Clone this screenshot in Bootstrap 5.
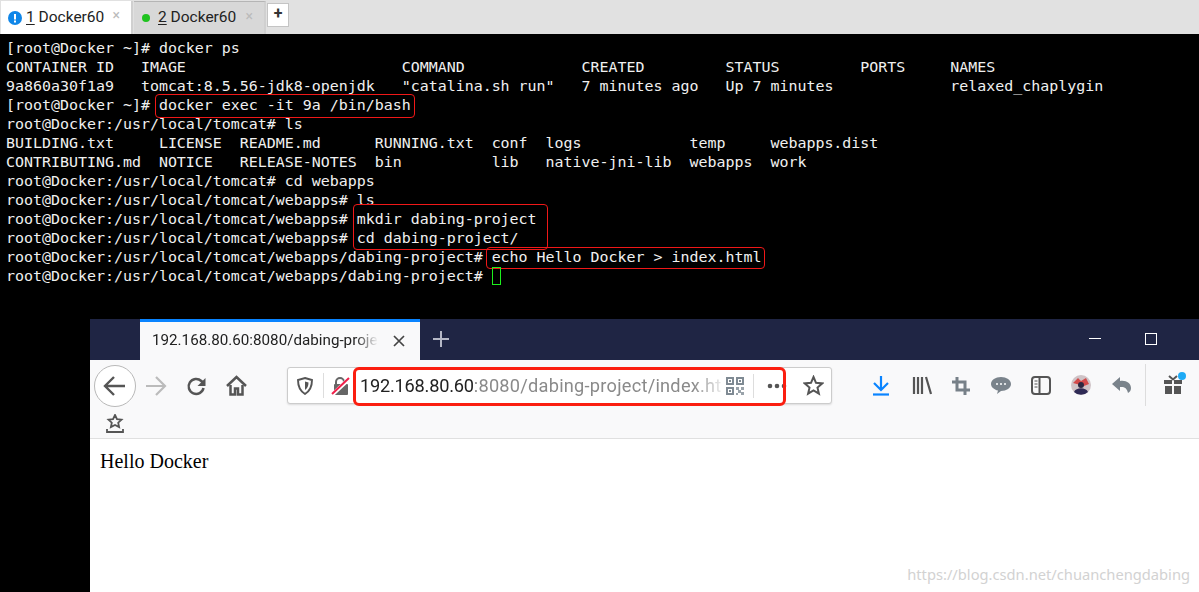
<!DOCTYPE html>
<html lang="en">
<head>
<meta charset="utf-8">
<title>Docker60</title>
<link href="https://cdn.jsdelivr.net/npm/bootstrap@5.3.0/dist/css/bootstrap.min.css" rel="stylesheet">
<style>
html,body{margin:0;height:592px;overflow:hidden;background:#000}
.desk{position:relative;width:1199px;height:592px;overflow:hidden;background:#000}
.tabbar{height:34px;background:#e1e1e1;padding-left:1px;font-family:Roboto,sans-serif;font-size:15.5px}
.xtab{height:33px;width:132px;margin-top:1px;background:#fff;color:#222;padding-left:7px;border-right:2px solid #d0d0d0;position:relative}
.xtab.off{background:#d8d8d8;margin-left:1px;color:#222;width:132px;border-top:1px solid #b5b5b5;padding-left:8px}
.xtab u{text-underline-offset:2px}
.xclose{position:absolute;right:11px;top:4px;color:#bbb;font-size:14px;line-height:20px}
.dotg{width:8px;height:8px;border-radius:50%;background:#1fc31f;display:block}
.plusb{width:22px;height:24px;background:#fff;border:1px solid #c4c4c4;margin:3px 0 0 1px;font-weight:700;color:#333;font-size:16px;line-height:20px;text-align:center}
.term{margin:0;padding:5px 0 0 6px;color:#f0f0f0;font-family:"DejaVu Sans Mono",monospace;font-size:14.95px;line-height:19px;overflow:visible}
.rbox{position:absolute;border:1px solid #f01818;border-radius:4px}
.r1{left:155px;top:94px;width:260px;height:24px}
.r2{left:353px;top:204px;width:195px;height:46px}
.r3{left:486px;top:247px;width:279px;height:22px}
.cursor{position:absolute;left:492px;top:267px;width:9px;height:18px;border:1px solid #1df01d}
.bwin{position:absolute;left:90px;top:319px;width:1109px;height:273px;background:#fff;font-family:Roboto,sans-serif}
.btitle{height:41px;background:#1f2544}
.btab{margin-left:50px;width:280px;height:41px;background:#f9f9fa;border-top:3px solid #0a84ff;font-size:15.2px;color:#222;padding-left:12px;white-space:nowrap;line-height:37px;position:relative}
.tabtxt{-webkit-mask-image:linear-gradient(90deg,#000 90%,transparent);mask-image:linear-gradient(90deg,#000 90%,transparent);display:inline-block}
.btab svg{position:absolute;left:252px;top:12px}
.bplus{margin-left:11px;margin-top:10px}
.winbtns{margin-left:auto;padding-right:42px;gap:44px;padding-top:14px;height:41px}
.tool{height:79px;background:#f9f9fa;border-bottom:1px solid #e0e0e0;position:relative}
.urlb{position:absolute;left:197px;top:7px;width:545px;height:37px;background:#fff;border:1px solid #ccc;border-radius:3px;box-shadow:0 1px 2px rgba(0,0,0,.12);font-size:18.2px;line-height:35px;white-space:nowrap}
.urltxt{position:absolute;left:72px;top:0;color:#8a8a8a;height:35px;letter-spacing:.25px;-webkit-mask-image:linear-gradient(90deg,#000 92%,rgba(0,0,0,.15));mask-image:linear-gradient(90deg,#000 92%,rgba(0,0,0,.15))}
.urltxt b{font-weight:400;color:#222;letter-spacing:-.22px}
.rurl{position:absolute;left:263px;top:7px;width:433px;height:39px;border:3.5px solid #fb1e10;border-radius:6px}
.ico{position:absolute}
.bbody{padding:11px 10px;font-family:"Liberation Serif",serif;font-size:20px;color:#000;line-height:22px}
.wmark{position:absolute;right:9px;bottom:9px;color:#d2d2d2;font-family:"Noto Sans",sans-serif;font-size:14.7px;line-height:18px;white-space:nowrap}
</style>
</head>
<body>
<div class="desk">
  <div class="tabbar d-flex">
    <div class="xtab d-flex align-items-center gap-1">
      <svg width="14" height="14" viewBox="0 0 14 14"><circle cx="7" cy="7" r="7" fill="#0f86e8"/><rect x="6" y="3" width="2" height="5.5" fill="#fff"/><rect x="6" y="9.500" width="2" height="2" fill="#fff"/></svg>
      <span><u>1</u> Docker60</span><span class="xclose">×</span>
    </div>
    <div class="xtab off d-flex align-items-center gap-2">
      <span class="dotg"></span><span><u>2</u> Docker60</span><span class="xclose">×</span>
    </div>
    <div class="plusb">+</div>
  </div>
<pre class="term">[root@Docker ~]# docker ps
CONTAINER ID   IMAGE                        COMMAND             CREATED         STATUS         PORTS     NAMES
9a860a30f1a9   tomcat:8.5.56-jdk8-openjdk   "catalina.sh run"   7 minutes ago   Up 7 minutes             relaxed_chaplygin
[root@Docker ~]# docker exec -it 9a /bin/bash
root@Docker:/usr/local/tomcat# ls
BUILDING.txt     LICENSE  README.md      RUNNING.txt  conf  logs            temp     webapps.dist
CONTRIBUTING.md  NOTICE   RELEASE-NOTES  bin          lib   native-jni-lib  webapps  work
root@Docker:/usr/local/tomcat# cd webapps
root@Docker:/usr/local/tomcat/webapps# ls
root@Docker:/usr/local/tomcat/webapps# mkdir dabing-project
root@Docker:/usr/local/tomcat/webapps# cd dabing-project/
root@Docker:/usr/local/tomcat/webapps/dabing-project# echo Hello Docker &gt; index.html
root@Docker:/usr/local/tomcat/webapps/dabing-project# </pre>
  <div class="rbox r1"></div><div class="rbox r2"></div><div class="rbox r3"></div><div class="cursor"></div>

  <div class="bwin">
    <div class="btitle d-flex">
      <div class="btab"><span class="tabtxt">192.168.80.60:8080/dabing-proje</span>
        <svg width="14" height="14" viewBox="0 0 14 14"><path d="M2 2l10 10M12 2L2 12" stroke="#444" stroke-width="1.7"/></svg></div>
      <svg class="bplus" width="20" height="20" viewBox="0 0 20 20"><path d="M10 2v16M2 10h16" stroke="#b5b8c6" stroke-width="2"/></svg>
      <div class="winbtns d-flex">
        <svg width="12" height="12" viewBox="0 0 12 12"><path d="M0 5.500h12" stroke="#fff"/></svg>
        <svg width="12" height="12" viewBox="0 0 12 12"><rect x=".5" y=".5" width="11" height="11" fill="none" stroke="#fff"/></svg>
      </div>
    </div>
    <div class="tool">
      <svg class="ico" style="left:4px;top:5px" width="42" height="42" viewBox="0 0 42 42"><circle cx="21" cy="21" r="20.500" fill="#fff" stroke="#b8b8b8"/><path d="M31 21H12M20 12l-9 9 9 9" fill="none" stroke="#555" stroke-width="2.400"/></svg>
      <svg class="ico" style="left:55px;top:16px" width="22" height="20" viewBox="0 0 22 20"><path d="M1 10h19M11 1l9 9-9 9" fill="none" stroke="#bbb" stroke-width="2.200"/></svg>
      <svg class="ico" style="left:96px;top:16px" width="21" height="21" viewBox="0 0 21 21"><path d="M17.500 12a7.500 7.500 0 1 1-2.200-7L18 7.500" fill="none" stroke="#555" stroke-width="2.500"/><path d="M19.500 2v8h-8z" fill="#555"/></svg>
      <svg class="ico" style="left:136px;top:15px" width="21" height="21" viewBox="0 0 21 21"><path d="M1 11l9.500-9 9.500 9" fill="none" stroke="#555" stroke-width="2.500"/><path d="M4.500 10v9.500h4.500v-6h3v6h4.500V10" fill="none" stroke="#555" stroke-width="2.500"/></svg>
      <svg class="ico" style="left:16px;top:54px" width="18" height="20" viewBox="0 0 18 20"><path d="M9 1l2 4.200 4.500.5-3.300 3 .9 4.400L9 10.900l-4.100 2.200.9-4.400-3.300-3L7 5.200z" fill="none" stroke="#555" stroke-width="1.800"/><path d="M1 15v3h16v-3" fill="none" stroke="#555" stroke-width="1.800"/></svg>
      <div class="urlb">
        <svg class="ico" style="left:9px;top:9px" width="16" height="18" viewBox="0 0 16 18"><path d="M8 1l7 2c0 7-2 11-7 14C3 14 1 10 1 3z" fill="none" stroke="#555" stroke-width="1.900"/><path d="M8 4.500l3.500 1c0 3.500-1 5.500-3.500 7.500z" fill="#555"/></svg>
        <span class="ico" style="left:35px;top:5px;height:25px;border-left:1px solid #ddd"></span>
        <svg class="ico" style="left:43px;top:8px" width="19" height="20" viewBox="0 0 19 20"><path d="M5 9V6a4 4 0 0 1 8 0v3" fill="none" stroke="#666" stroke-width="2"/><rect x="3" y="8" width="14" height="11" rx="1" fill="#666"/><path d="M1 19L18 3" stroke="#fff" stroke-width="4"/><path d="M1 18L18 2" stroke="#f0204a" stroke-width="2"/></svg>
        <div class="urltxt"><b>192.168.80.60</b>:8080/dabing-project/index.ht</div>
        <svg class="ico" style="left:438px;top:9px" width="18" height="18" viewBox="0 0 18 18"><path d="M0 0h8v8H0zM10 0h8v8h-8zM0 10h8v8H0z" fill="#7f8a93"/><path d="M2 2h4v4H2zM12 2h4v4h-4zM2 12h4v4H2z" fill="#fff"/><path d="M3 3h2v2H3zM13 3h2v2h-2zM3 13h2v2H3z" fill="#7f8a93"/><path d="M10 10h3v3h-3zM15 10h3v3h-3zM12 13h3v3h-3zM10 16h2v2h-2zM15 15h3v3h-3z" fill="#9aa3aa"/></svg>
        <span class="ico" style="left:465px;top:6px;height:24px;border-left:1px solid #ddd"></span>
        <svg class="ico" style="left:479px;top:15px" width="20" height="6" viewBox="0 0 20 6"><circle cx="3" cy="3" r="2.300" fill="#555"/><circle cx="10" cy="3" r="2.300" fill="#555"/><circle cx="17" cy="3" r="2.300" fill="#555"/></svg>
        <svg class="ico" style="left:515px;top:7px" width="21" height="21" viewBox="0 0 21 21"><path d="M10.500 2l2.500 5.800 6.200.6-4.700 4.200 1.400 6.100-5.400-3.200-5.400 3.200 1.400-6.100L1.800 8.400 8 7.800z" fill="none" stroke="#555" stroke-width="2"/></svg>
      </div>
      <div class="rurl"></div>
      <svg class="ico" style="left:782px;top:15px" width="18" height="21" viewBox="0 0 18 21"><path d="M9 1v13M2 8l7 7 7-7" fill="none" stroke="#0a84ff" stroke-width="2.200"/><path d="M1 19.500h16" stroke="#0a84ff" stroke-width="2.200"/></svg>
      <svg class="ico" style="left:822px;top:16px" width="20" height="19" viewBox="0 0 20 19"><path d="M2 1v17M6 1v17M10 1v17M14 1l5 17" fill="none" stroke="#555" stroke-width="2.200"/></svg>
      <svg class="ico" style="left:862px;top:17px" width="18" height="18" viewBox="0 0 18 18"><path d="M5 0v13h13M0 5h13v13" fill="none" stroke="#778088" stroke-width="3"/></svg>
      <svg class="ico" style="left:901px;top:16px" width="20" height="19" viewBox="0 0 20 19"><path d="M10 1c5.500 0 10 2.900 10 7s-4.500 7-10 7l-4 3 1-3.400C3 13.600 0 11 0 8c0-4.100 4.500-7 10-7z" fill="#7a838b"/><circle cx="6" cy="8" r="1" fill="#fff"/><circle cx="10" cy="8" r="1" fill="#fff"/><circle cx="14" cy="8" r="1" fill="#fff"/></svg>
      <svg class="ico" style="left:941px;top:16px" width="20" height="19" viewBox="0 0 20 19"><rect x="1" y="1" width="18" height="17" rx="3" fill="none" stroke="#555" stroke-width="2"/><path d="M8.500 1v17" stroke="#555" stroke-width="2"/><path d="M3.500 5h3M3.500 8h3M3.500 11h3" stroke="#555"/></svg>
      <svg class="ico" style="left:981px;top:15px" width="20" height="20" viewBox="0 0 20 20"><circle cx="10" cy="10" r="10" fill="#cfc3c6"/><path d="M2 8l5-5 3 3 5-3 3 6-5 2z" fill="#d24a4a"/><circle cx="10" cy="10" r="3" fill="#2c2740"/><path d="M3 17c2-5 12-5 14 0a10 10 0 0 1-14 0z" fill="#2f2a55"/></svg>
      <svg class="ico" style="left:1022px;top:16px" width="19" height="19" viewBox="0 0 19 19"><path d="M8 1L0 8l8 7v-4c4-.5 7 .8 8 6 2-1 3-3 3-5 0-5-5-8-11-7z" fill="#7a838b"/></svg>
      <span class="ico" style="left:1055px;top:4px;height:42px;border-left:1px solid #ddd"></span>
      <svg class="ico" style="left:1073px;top:12px" width="26" height="24" viewBox="0 0 26 24"><path d="M1 8h8v4H1zM11 8h8v4h-8zM2 14h7v8H2zM11 14h7v8h-7z" fill="#555"/><path d="M6 4l4 3.500L14 4" fill="none" stroke="#555" stroke-width="2"/><circle cx="19" cy="4" r="4" fill="#1eaaf5"/></svg>
    </div>
    <div class="bbody">Hello Docker</div>
  </div>
  <div class="wmark">https://blog.csdn.net/chuanchengdabing</div>
</div>
<script src="https://cdn.jsdelivr.net/npm/bootstrap@5.3.0/dist/js/bootstrap.bundle.min.js"></script>
</body>
</html>
